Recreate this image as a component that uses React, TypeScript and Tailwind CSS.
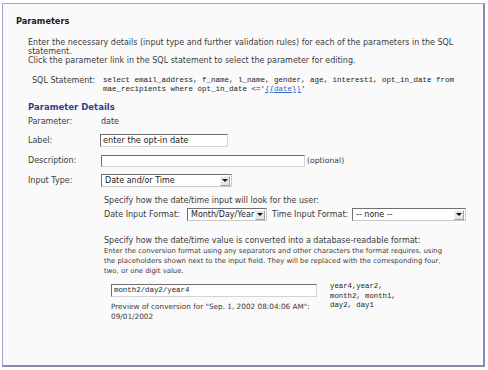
import React from "react";

const sans = { fontFamily: '"DejaVu Sans", Verdana, sans-serif' };
const mono = { fontFamily: '"Liberation Mono", "Courier New", monospace' };

function Arrow() {
  return (
    <div className="w-[10px] h-[10px] bg-[#e6e6e6] border border-[#a0a0a0] border-t-[#f4f4f4] border-l-[#f4f4f4] flex items-center justify-center">
      <div className="w-0 h-0 border-l-[3px] border-r-[3px] border-t-[3px] border-l-transparent border-r-transparent border-t-[#111]" />
    </div>
  );
}

function Select({ w, text }: { w: string; text: string }) {
  return (
    <div className={`${w} h-[13px] bg-white border border-[#6f6f6f] border-b-[#c8c8c8] border-r-[#c8c8c8] flex items-center justify-between pl-[3px] pr-[1px]`}>
      <span className="text-[8px] leading-[10px] text-[#222] whitespace-nowrap">{text}</span>
      <Arrow />
    </div>
  );
}

export default function App() {
  return (
    <div className="w-[488px] h-[370px] bg-white pt-[3px] pl-[2px] text-[#3a3a3a]" style={sans}>
      <div className="w-[483px] h-[364px] border border-[#a3a3c6] border-r-2 border-b-2 border-r-[#8a8aae] border-b-[#8a8aae] bg-[#fafafa] pl-[13px] overflow-hidden">
        <div className="mt-[12px] h-[10px] leading-[10px] text-[8.2px] font-bold text-[#222]">Parameters</div>
        <div className="mt-[12px] ml-[12px] text-[8px] leading-[9px] whitespace-nowrap">
          <div>Enter the necessary details (input type and further validation rules) for each of the parameters in the SQL</div>
          <div>statement.</div>
          <div>Click the parameter link in the SQL statement to select the parameter for editing.</div>
        </div>
        <div className="mt-[11px] ml-[16px] flex">
          <div className="w-[71px] text-[8px] leading-[9px]">SQL Statement:</div>
          <div className="text-[7.5px] leading-[9px] text-[#222] whitespace-nowrap" style={mono}>
            <div>select email_address, f_name, l_name, gender, age, interest1, opt_in_date from</div>
            <div>
              mae_recipients where opt_in_date &lt;='<span className="text-[#3366cc] underline">{"{{date}}"}</span>'
            </div>
          </div>
        </div>
        <div className="mt-[8px] ml-[12px] h-[10px] text-[8.5px] font-bold leading-[10px] text-[#3b3b8e]">Parameter Details</div>
        <div className="ml-[12px] text-[8px]">
          <div className="mt-[3px] h-[14px] flex items-center">
            <div className="w-[73px]">Parameter:</div>
            <div>date</div>
          </div>
          <div className="mt-[5px] h-[13px] flex items-center">
            <div className="w-[72px]">Label:</div>
            <div className="w-[128px] h-[13px] bg-white border border-[#6f6f6f] border-b-[#d4d4d4] border-r-[#d4d4d4] pl-[2px] flex items-center text-[8.2px] text-[#222]">enter the opt-in date</div>
          </div>
          <div className="mt-[7px] h-[13px] flex items-center">
            <div className="w-[73px]">Description:</div>
            <div className="w-[204px] h-[12px] bg-white border border-[#6f6f6f] border-b-[#d4d4d4] border-r-[#d4d4d4]" />
            <div className="ml-[2px] text-[7.7px]">(optional)</div>
          </div>
          <div className="mt-[7px] h-[13px] flex items-center">
            <div className="w-[73px]">Input Type:</div>
            <Select w="w-[131px]" text="Date and/or Time" />
          </div>
          <div className="ml-[76px]">
            <div className="mt-[9px] h-[10px] leading-[10px]">Specify how the date/time input will look for the user:</div>
            <div className="mt-[2px] h-[13px] flex items-center">
              <div className="w-[83px] whitespace-nowrap">Date Input Format:</div>
              <Select w="w-[80px]" text="Month/Day/Year" />
              <div className="ml-[5px] w-[80px] whitespace-nowrap">Time Input Format:</div>
              <Select w="w-[114px]" text="-- none --" />
            </div>
            <div className="mt-[15px] h-[10px] leading-[10px] whitespace-nowrap">Specify how the date/time value is converted into a database-readable format:</div>
            <div className="text-[6.9px] leading-[10px] whitespace-nowrap">
              <div>Enter the conversion format using any separators and other characters the format requires, using</div>
              <div>the placeholders shown next to the input field. They will be replaced with the corresponding four,</div>
              <div>two, or one digit value.</div>
            </div>
            <div className="mt-[8px] ml-[7px] flex">
              <div className="w-[219px]">
                <div className="w-[206px] h-[13px] bg-white border border-[#6f6f6f] border-b-[#d4d4d4] border-r-[#d4d4d4] pl-[2px] flex items-center text-[7.4px] text-[#222]" style={mono}>month2/day2/year4</div>
                <div className="mt-[5px] text-[7.3px] leading-[10px] whitespace-nowrap">Preview of conversion for "Sep. 1, 2002 08:04:06 AM":</div>
                <div className="text-[7.3px] leading-[10px]">09/01/2002</div>
              </div>
              <div className="text-[7.3px] leading-[9.5px] text-[#222] -mt-[2px] whitespace-nowrap" style={mono}>
                <div>year4,year2,</div>
                <div>month2, month1,</div>
                <div>day2, day1</div>
              </div>
            </div>
          </div>
        </div>
      </div>
    </div>
  );
}
